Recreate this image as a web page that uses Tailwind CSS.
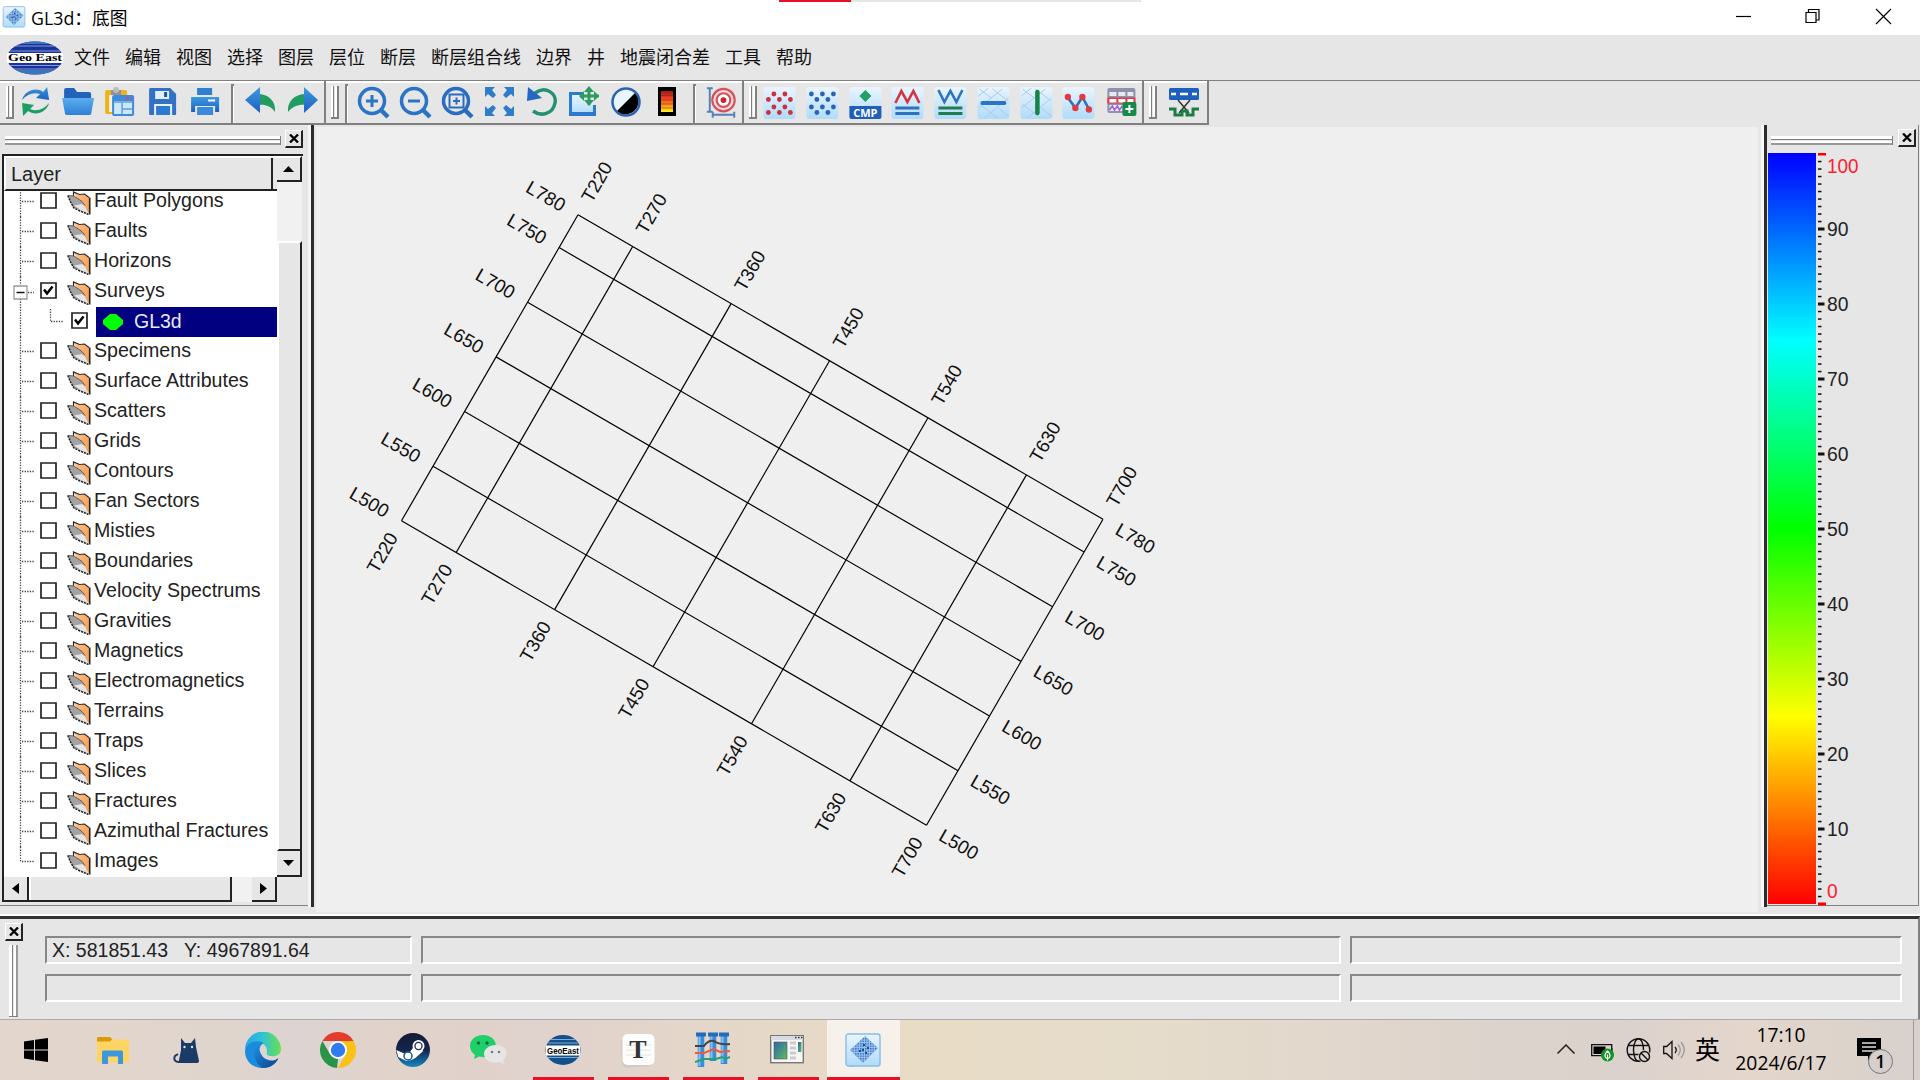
<!DOCTYPE html>
<html lang="zh-CN">
<head>
<meta charset="utf-8">
<title>GL3d：底图</title>
<script src="https://cdn.jsdelivr.net/npm/@tailwindcss/browser@4"></script>
</head>
<body class="w-[1920px] h-[1080px] overflow-hidden flex flex-col bg-[#e6e6e6] text-black font-['Liberation_Sans','Noto_Sans_CJK_SC',sans-serif]">

<!-- shared gradients and symbols -->
<svg class="absolute w-0 h-0" aria-hidden="true">
  <defs>
    <linearGradient id="blue" x1="0" y1="0" x2="0" y2="1"><stop offset="0" stop-color="#3b9bdc"/><stop offset="1" stop-color="#1d5fc4"/></linearGradient>
    <linearGradient id="folderBlue" x1="0" y1="0" x2="0" y2="1"><stop offset="0" stop-color="#5aaef0"/><stop offset="1" stop-color="#2f7fd6"/></linearGradient>
    <linearGradient id="tile" x1="0" y1="0" x2="0" y2="1"><stop offset="0" stop-color="#eaf5fe"/><stop offset="1" stop-color="#b0dbfa"/></linearGradient>
    <linearGradient id="green" x1="0" y1="0" x2="1" y2="1"><stop offset="0" stop-color="#159a6c"/><stop offset="1" stop-color="#158043"/></linearGradient>
    <linearGradient id="heat" x1="0" y1="0" x2="0" y2="1"><stop offset="0" stop-color="#a01818"/><stop offset=".35" stop-color="#f04020"/><stop offset=".65" stop-color="#ff8a20"/><stop offset="1" stop-color="#fff41c"/></linearGradient>
    <linearGradient id="edgeA" x1="0" y1="0" x2="1" y2="0"><stop offset="0" stop-color="#2aa7e8"/><stop offset=".5" stop-color="#31c4d4"/><stop offset="1" stop-color="#6be04a"/></linearGradient>
    <linearGradient id="edgeB" x1="0" y1="0" x2="1" y2="1"><stop offset="0" stop-color="#1d8ddf"/><stop offset="1" stop-color="#0d3f8c"/></linearGradient>
    <linearGradient id="steam" x1="0" y1="0" x2="0" y2="1"><stop offset="0" stop-color="#141a33"/><stop offset=".5" stop-color="#142450"/><stop offset="1" stop-color="#1489c0"/></linearGradient>
    <linearGradient id="screen" x1="0" y1="0" x2="1" y2="1"><stop offset="0" stop-color="#2b66ae"/><stop offset="1" stop-color="#5fbf5a"/></linearGradient>
    <linearGradient id="flap" x1="0" y1="0" x2="1" y2="1"><stop offset="0" stop-color="#ffc38c"/><stop offset="1" stop-color="#f59a4c"/></linearGradient>
    <pattern id="mesh" width="2.500" height="2.500" patternUnits="userSpaceOnUse"><rect width="2.500" height="2.500" fill="#9cc6f0"/><rect width="1.500" height="1.500" fill="#3a72bd"/></pattern>
    <symbol id="appicon" viewBox="0 0 36 36">
      <rect x="1" y="1" width="34" height="32" rx="2.500" fill="url(#tile)" stroke="#87bde6" stroke-width="1.400"/>
      <path d="M20 3L33 15L18 30L5 17Z" fill="url(#mesh)"/>
      <path d="M18 12h2M22 15h2M17 17h2M20 20h2M14 18h2" stroke="#184b94" stroke-width="2"/>
    </symbol>
    <symbol id="folder" viewBox="0 0 24 24">
      <path d="M6.500 1l6 2.500 5-.500 4.500 4v15l-7-6z" fill="url(#flap)"/>
      <path d="M.800 4.500L7 5l8 5.500 3 6 3.500 6.500-8-3.500L6 16z" fill="#a3a3a3"/>
      <path d="M7 14.500l8-1.500 3 2.500 3.500 7-8-3.500z" fill="#e4e4e4"/>
      <path d="M6.500 5V1l6 2.500 5-.500 4.500 3.500" fill="none" stroke="#2a2a2a" stroke-width="1.200"/>
      <path d="M.800 4.500l3 7L7 17l6 3 8.500 3.500" fill="none" stroke="#222" stroke-width="1.500" stroke-dasharray="2.200 .9"/>
      <path d="M.800 4.500L7 5l8 5.500 3 4" fill="none" stroke="#555" stroke-width=".9"/>
      <path d="M22.700 6.500V23.500" stroke="#222" stroke-width="1.600"/>
    </symbol>
  </defs>
</svg>

<!-- title bar -->
<header class="relative h-[35px] shrink-0 bg-white flex items-center">
  <svg class="ml-[2px] mt-[-1px] w-6 h-[23px]"><use href="#appicon"/></svg>
  <h1 class="ml-[5px] text-[17.800px] leading-[24px] font-['Open_Sans','Noto_Sans_CJK_SC',sans-serif] whitespace-nowrap">GL3d：底图</h1>
  <div class="absolute left-[779px] top-0 w-[362px] h-[2px] bg-[#e6e6e6]"><div class="w-[72px] h-full bg-[#e81123]"></div></div>
  <svg class="ml-auto mr-[28px] mt-[-3px] w-[160px] h-[20px]" fill="none" stroke="#000" stroke-width="1.200">
    <path d="M4 10.500h15"/>
    <path d="M74 6.500h10v10H74zM76.500 6.500V3.500h10.500v10.500h-3"/>
    <path d="M144 3l15 15M159 3l-15 15"/>
  </svg>
</header>

<!-- menu bar -->
<nav class="h-[45px] shrink-0 flex items-center text-[18px] leading-[24px] text-[#111] whitespace-nowrap">
  <svg class="ml-[7px] w-[56px] h-[34px]" viewBox="0 0 56 34">
    <clipPath id="oval"><ellipse cx="28" cy="17" rx="28" ry="16.500"/></clipPath>
    <g clip-path="url(#oval)"><path fill="#17339c" d="M0 0h56v34H0z"/><path fill="#3a76c0" d="M0 0h56v3H0zM0 29h56v5H0z"/><path stroke="#8d9ad0" stroke-width="1.200" d="M0 5h56M0 10h56M0 24.500h56M0 28h56"/></g>
    <path fill="#fff" d="M0 12h56v10H0z"/>
    <text x="28" y="20.300" text-anchor="middle" textLength="54" lengthAdjust="spacingAndGlyphs" class="font-['Liberation_Serif',serif] font-bold text-[10px]">Geo East</text>
  </svg>
  <ul class="ml-[11px] flex gap-[15px]">
    <li>文件</li><li>编辑</li><li>视图</li><li>选择</li><li>图层</li><li>层位</li><li>断层</li><li>断层组合线</li><li>边界</li><li>井</li><li>地震闭合差</li><li>工具</li><li>帮助</li>
  </ul>
</nav>

<!-- tool bar -->
<div class="h-[45px] shrink-0 border-t border-[#808080] flex">
  <div class="flex h-full border-b-2 border-[#808080] shadow-[inset_0_2px_0_#fff]">
    <!-- file group -->
    <section class="flex w-[326px] border-r-2 border-[#808080] items-stretch">
      <div class="ml-[6px] mt-[5px] mb-[4px] w-[8px] flex gap-[1px] border-b-2 border-[#808080]"><i class="w-[4px] bg-white border-r border-[#808080]"></i><i class="w-[4px] bg-white border-r-2 border-[#808080]"></i></div>
      <div class="ml-[1px] mt-[2px] flex w-[211px] items-center">
        <svg class="flex-1 h-[34px]" viewBox="0 0 42 34">
          <path d="M7 14C10 4 21 1 28 6l4-5 2 13-13-2 4-4C18 6 12 8 7 14z" fill="url(#blue)"/>
          <path d="M34 17C31 27 20 30 13 25l-5 5-1-13 12 2-4 4C22 26 29 23 34 17z" fill="#1d9e63"/>
        </svg>
        <svg class="flex-1 h-[34px]" viewBox="0 0 42 34">
          <path d="M7 4q0-2 2-2h8l3 4h12q2 0 2 2v8H7z" fill="#2262b8"/><path d="M5 12h32l-3 16q0 1-2 1H10q-2 0-2-1z" fill="url(#folderBlue)"/>
        </svg>
        <svg class="flex-1 h-[34px]" viewBox="0 0 42 34">
          <rect x="6" y="4" width="22" height="24" rx="2" fill="#eeb21b"/><path d="M12 4h10v5H12z" fill="#8d9299"/><circle cx="17" cy="4" r="3" fill="#b9bdc2"/><path d="M10 9h14v17H10z" fill="#f7f0df"/>
          <rect x="13" y="9" width="22" height="21" rx="2" fill="#3d8bdf"/><path d="M15 15h18v13H15z" fill="#cde7fb"/><path d="M15 16h18M23 16v12M23 23h10" stroke="#5a9fe0" stroke-width="1.500"/><path d="M27 12.500h2M31 12.500h2" stroke="#e8434a" stroke-width="2"/>
        </svg>
        <svg class="flex-1 h-[34px]" viewBox="0 0 42 34">
          <path d="M8 2h20l6 6v20q0 1-1 1H8q-1 0-1-1V3z" fill="#3171c6"/><path d="M13 5h14v8H13z" fill="#dff0fd"/><path d="M22 6h3v5h-3z" fill="#22559f"/><path d="M12 18h18v11H12z" fill="#e6f1fb"/><path d="M14 20h14v9H14z" fill="#2d7ad2"/>
        </svg>
        <svg class="flex-1 h-[34px]" viewBox="0 0 42 34">
          <path d="M13 2h15v7H13z" fill="#2f7fd0"/><path d="M7 11h28v15h-4v-6H11v6H7z" fill="url(#blue)"/><path d="M13 21h16v8H13z" fill="#3a8adb"/><path d="M24 14.500h7" stroke="#fff" stroke-width="2"/>
        </svg>
      </div>
      <div class="ml-[5px] mt-[3px] w-[3px] border-l-2 border-t-2 border-[#808080] bg-white"></div>
      <div class="ml-[6px] mt-[2px] flex w-[84px] items-center">
        <svg class="flex-1 h-[34px]" viewBox="0 0 42 34"><path d="M17 8C29 8 36 15 35 26C31 20 25 18 17 19z" fill="#239c64"/><path d="M5 14L20 1v26z" fill="url(#blue)"/></svg>
        <svg class="flex-1 h-[34px]" viewBox="0 0 42 34"><path d="M24 8C12 8 5 16 6 26C11 20 17 18 25 19z" fill="#239c64"/><path d="M36 14L22 1v26z" fill="url(#blue)"/></svg>
      </div>
    </section>
    <!-- view group -->
    <section class="flex w-[418px] border-r-2 border-[#808080] items-stretch">
      <div class="ml-[5px] mt-[5px] mb-[4px] w-[8px] flex gap-[1px] border-b-2 border-[#808080]"><i class="w-[4px] bg-white border-r border-[#808080]"></i><i class="w-[4px] bg-white border-r-2 border-[#808080]"></i></div>
      <div class="ml-[6px] mt-[3px] w-[3px] border-l-2 border-t-2 border-[#808080] bg-white"></div>
      <div class="ml-[5px] mt-[2px] flex w-[336px] items-center">
        <svg class="flex-1 h-[34px]" viewBox="0 0 42 34" fill="none" stroke="#2a74c6"><circle cx="19" cy="15" r="12.500" stroke-width="3.500"/><path d="M28 24l7 7" stroke-width="4.500"/><path d="M19 9v12M13 15h12" stroke-width="3"/></svg>
        <svg class="flex-1 h-[34px]" viewBox="0 0 42 34" fill="none" stroke="#2a74c6"><circle cx="19" cy="15" r="12.500" stroke-width="3.500"/><path d="M28 24l7 7" stroke-width="4.500"/><path d="M13 15h12" stroke-width="3"/></svg>
        <svg class="flex-1 h-[34px]" viewBox="0 0 42 34" fill="none" stroke="#2a6cc0"><circle cx="19" cy="15" r="12.500" stroke-width="3.500"/><path d="M28 24l7 7" stroke-width="4.500"/><path d="M12.500 8.500h14v13h-14z" stroke-width="2"/><path d="M19.500 11.500v7M16 15h7" stroke-width="2"/></svg>
        <svg class="flex-1 h-[34px]" viewBox="0 0 42 34" fill="#2f7cc9"><path d="M6 1h10l-3 3 4 5-3 3-5-4-3 3zM35 1H25l3 3-4 5 3 3 5-4 3 3zM6 30h10l-3-3 4-5-3-3-5 4-3-3zM35 30H25l3-3-4-5 3-3 5 4 3-3z"/></svg>
        <svg class="flex-1 h-[34px]" viewBox="0 0 42 34" fill="none"><path d="M14 7C25-1 36 8 34 17C32 28 20 31 12 25" stroke="#239076" stroke-width="3.500"/><path d="M7 1l14 11L6 15z" fill="#2467c4"/></svg>
        <svg class="flex-1 h-[34px]" viewBox="0 0 42 34"><path d="M7.500 7.500h24v21h-24z" fill="url(#tile)" stroke="#2b7dcc" stroke-width="3"/><path d="M6 26h27v4H6z" fill="#2b78cc"/><path d="M19 1h17v18H22z" fill="#e6e6e6"/><path d="M26 2v17M17 10h19" stroke="#2c9d61" stroke-width="3"/><path d="M26 0l5 6H21zM26 20l5-6H21zM16 10l5-5v10zM36 10l-5-5v10z" fill="#2c9d61"/></svg>
        <svg class="flex-1 h-[34px]" viewBox="0 0 42 34"><circle cx="21" cy="16" r="13.500" fill="#e9f4fe"/><path d="M11.500 25.500L30.500 6.500A13.500 13.500 0 0 1 11.500 25.500z" fill="#000"/><circle cx="21" cy="16" r="13.500" fill="none" stroke="#2a63b0" stroke-width="2.500"/></svg>
        <svg class="flex-1 h-[34px]" viewBox="0 0 42 34"><path d="M11 1h18v29H11z" fill="#000"/><path d="M14 5h12v21H14z" fill="url(#heat)"/><path d="M14 9.500h12M14 14h12M14 18h12M14 22h12" stroke="#7a2010" stroke-width=".5"/></svg>
      </div>
      <div class="ml-[4px] mt-[3px] w-[3px] border-l-2 border-t-2 border-[#808080] bg-white"></div>
      <svg class="ml-[5px] mt-[5px] w-[42px] h-[34px]" viewBox="0 0 42 34" fill="none"><path d="M9 2v24M6 2h6M6 26h6M12 29h22M12 26v6M34 26v6" stroke="#5582b4" stroke-width="2"/><circle cx="23" cy="14" r="11.500" fill="#fbdada" stroke="#d5515c" stroke-width="2.200"/><circle cx="23" cy="14" r="7" fill="#fff" stroke="#d5515c" stroke-width="2.200"/><circle cx="23" cy="14" r="3" fill="#c9242f"/></svg>
    </section>
    <!-- display group -->
    <section class="flex w-[400px] border-r-2 border-[#808080] items-stretch">
      <div class="ml-[5px] mt-[5px] mb-[4px] w-[8px] flex gap-[1px] border-b-2 border-[#808080]"><i class="w-[4px] bg-white border-r border-[#808080]"></i><i class="w-[4px] bg-white border-r-2 border-[#808080]"></i></div>
      <div class="ml-[1px] mt-[5px] flex w-[385px] shrink-0">
        <svg class="flex-1 h-[34px]" viewBox="0 0 42 34"><rect x="5" y="1" width="32" height="32" rx="3" fill="url(#tile)"/><g fill="#cc3038" class="dots"></g></svg>
        <svg class="flex-1 h-[34px]" viewBox="0 0 42 34"><rect x="5" y="1" width="32" height="32" rx="3" fill="url(#tile)"/><g fill="#2a62b4" class="dots"></g></svg>
        <svg class="flex-1 h-[34px]" viewBox="0 0 42 34"><rect x="5" y="1" width="32" height="32" rx="3" fill="url(#tile)"/><path d="M5 20h32v11q0 2-2 2H7q-2 0-2-2z" fill="#1f5fba"/><path d="M21 4l6 6-6 6-6-6z" fill="#24a066"/><text x="21" y="30.500" text-anchor="middle" fill="#fff" class="font-['Open_Sans',sans-serif] font-bold text-[11px]">CMP</text></svg>
        <svg class="flex-1 h-[34px]" viewBox="0 0 42 34"><rect x="5" y="1" width="32" height="32" rx="3" fill="url(#tile)"/><path d="M9 17l6-12 6 11 6-11 6 12" fill="none" stroke="#d5343d" stroke-width="2.600"/><path d="M9 22h24M9 27.500h24" stroke="#2e72bf" stroke-width="2.800"/></svg>
        <svg class="flex-1 h-[34px]" viewBox="0 0 42 34"><rect x="5" y="1" width="32" height="32" rx="3" fill="url(#tile)"/><path d="M9 4l6 12 6-11 6 11 6-12" fill="none" stroke="#2e72bf" stroke-width="2.600"/><path d="M9 22h24M9 27.500h24" stroke="#217d4b" stroke-width="2.800"/></svg>
        <svg class="flex-1 h-[34px]" viewBox="0 0 42 34"><rect x="5" y="1" width="32" height="32" rx="3" fill="url(#tile)"/><path d="M6 10l10-8M6 22L30 3M12 32L36 12M7 3l12 9M20 3l16 12M7 18l18 14M26 22l10 8" stroke="#a9cde8" stroke-width="1"/><path d="M10 17h22" stroke="#2b73c3" stroke-width="4" stroke-linecap="round"/></svg>
        <svg class="flex-1 h-[34px]" viewBox="0 0 42 34"><rect x="5" y="1" width="32" height="32" rx="3" fill="url(#tile)"/><path d="M6 10l10-8M6 22L30 3M12 32L36 12M7 3l12 9M20 3l16 12M7 18l18 14M26 22l10 8" stroke="#a9cde8" stroke-width="1"/><path d="M22 6v21" stroke="#158546" stroke-width="4.500" stroke-linecap="round"/></svg>
        <svg class="flex-1 h-[34px]" viewBox="0 0 42 34"><rect x="5" y="1" width="32" height="32" rx="3" fill="url(#tile)"/><path d="M10 11l8 11 7-11 7 13" fill="none" stroke="#2e6db9" stroke-width="2.600"/><g fill="#e13a41"><circle cx="10.500" cy="11" r="3.200"/><circle cx="18" cy="22" r="3.200"/><circle cx="25" cy="11" r="3.200"/><circle cx="31.500" cy="23.500" r="3.200"/></g></svg>
        <svg class="flex-1 h-[34px]" viewBox="0 0 42 34"><rect x="7" y="2" width="28" height="25" rx="2" fill="#8d93aa"/><path d="M9 6h7v4H9zM18 6h7v4h-7zM27 6h6v4h-6zM9 19h24v6H9z" fill="#e8e9f2"/><path d="M7 11.500h28v6H7z" fill="#e23a48"/><path d="M9 13h7v3.500H9zM18 13h7v3.500h-7zM27 13h6v3.500h-6z" fill="#fff"/><path d="M9 24l3-4 2 4 3-4 2 4 3-4" fill="none" stroke="#a35bd6" stroke-width="1.500"/><rect x="22" y="16" width="14" height="14" rx="2" fill="#178a49"/><path d="M29 19v8M25 23h8" stroke="#fff" stroke-width="2"/></svg>
      </div>
    </section>
    <section class="flex w-[65px] border-r-2 border-[#808080] items-stretch">
      <div class="ml-[5px] mt-[5px] mb-[4px] w-[8px] flex gap-[1px] border-b-2 border-[#808080]"><i class="w-[4px] bg-white border-r border-[#808080]"></i><i class="w-[4px] bg-white border-r-2 border-[#808080]"></i></div>
      <svg class="ml-[6px] mt-[5px] w-[42px] h-[34px]" viewBox="0 0 42 34" fill="none"><rect x="6" y="2" width="30" height="12" rx="1.500" fill="#1e60bd"/><path d="M8 8h5M17 8h8M29 8h5" stroke="#fff" stroke-width="2.500"/><path d="M15 14l11 13M27 14L16 27" stroke="#333" stroke-width="1.500"/><path d="M6 23h6v6h7v-4h5v4h6v-6h6" stroke="#1d7c46" stroke-width="3"/></svg>
    </section>
  </div>
</div>

<!-- work area -->
<main class="h-[789px] shrink-0 flex">
  <!-- layer dock -->
  <aside class="w-[308px] h-[781px] shrink-0 border-b border-[#808080] pl-[2px]">
    <div class="h-[29px] flex items-start">
      <div class="ml-[3px] mt-[11px] w-[276px] h-[9px] border-r border-[#808080] flex flex-col gap-[1px]"><i class="h-[4px] bg-white border-b border-[#808080]"></i><i class="h-[4px] bg-white border-b-2 border-[#999]"></i></div>
      <button class="ml-[4px] mt-[5px] w-[18px] h-[18px] bg-[#e6e6e6] border-l border-t border-l-white border-t-white border-r-2 border-b-2 border-r-[#222] border-b-[#222] flex items-center justify-center"><svg class="w-[10px] h-[9px]" viewBox="0 0 10 9"><path d="M1 .500l8 8M9 .500l-8 8" stroke="#000" stroke-width="2.300"/></svg></button>
    </div>
    <div class="w-[301px] h-[748px] border-l-2 border-t-2 border-[#222] flex">
      <div class="w-[273px] flex flex-col bg-white">
        <div class="h-[35px] shrink-0 bg-[#e6e6e6] border-l-2 border-t-2 border-white border-b-2 border-b-[#222] pl-[5px] pr-[4px] flex items-center justify-between text-[20px] text-[#222]"><span class="pt-[1px]">Layer</span><i class="h-full border-r-2 border-[#222]"></i></div>
        <div id="tree" class="h-[687px] overflow-hidden bg-white"></div>
        <div class="h-[25px] shrink-0 flex">
          <div class="w-[25px] bg-[#e6e6e6] border-r-2 border-b-2 border-[#222] flex items-center justify-center"><svg class="w-[7px] h-[11px]"><path d="M7 0v11L0 5.500z"/></svg></div>
          <div class="w-[203px] bg-[#e6e6e6] border-r-2 border-b-2 border-[#222] shadow-[inset_2px_0_0_#fff]"></div>
          <div class="w-[20px] bg-[#f1f1f1]"></div>
          <div class="w-[25px] bg-[#e6e6e6] border-r-2 border-b-2 border-[#222] flex items-center justify-center"><svg class="w-[7px] h-[11px]"><path d="M0 0v11l7-5.500z"/></svg></div>
        </div>
      </div>
      <div class="w-[26px] pr-[1px] flex flex-col">
        <div class="h-[26px] bg-[#e6e6e6] border-t-2 border-t-white border-r-2 border-b-2 border-r-[#222] border-b-[#222] flex items-center justify-center"><svg class="w-[11px] h-[6px]"><path d="M0 6h11L5.500 0z"/></svg></div>
        <div class="h-[59px] bg-[#f1f1f1]"></div>
        <div class="h-[610px] bg-[#e6e6e6] border-t-2 border-l-2 border-l-white border-t-white border-r-2 border-b-2 border-r-[#222] border-b-[#222]"></div>
        <div class="h-[26px] bg-[#e6e6e6] border-r-2 border-b-2 border-[#222] flex items-center justify-center"><svg class="w-[11px] h-[6px]"><path d="M0 0h11L5.500 6z"/></svg></div>
      </div>
    </div>
  </aside>
  <div class="w-[8px] h-[782px] shrink-0 flex"><i class="w-[3px] bg-[#f4f4f4]"></i><i class="w-[3px] bg-[#2c2c2c]"></i></div>

  <!-- base map -->
  <section class="w-[1442px] h-[785px] shrink-0 mt-[2px] -mb-[2px] bg-[#efefef]">
    <svg id="map" class="w-[1442px] h-[785px] font-['Liberation_Sans',sans-serif] text-[18.800px]" viewBox="316 126.500 1442 785"></svg>
  </section>
  <div class="w-[9px] h-[782px] shrink-0 flex"><i class="w-[3px]"></i><i class="w-[3px] bg-[#f8f8f8]"></i><i class="w-[3px] bg-[#2c2c2c]"></i></div>

  <!-- colour scale dock -->
  <aside class="w-[152px] h-[781px] shrink-0 border-b border-r border-[#808080]">
    <div class="h-[28px] flex items-start">
      <div class="ml-[4px] mt-[11px] w-[122px] h-[9px] border-r border-[#808080] flex flex-col gap-[1px]"><i class="h-[4px] bg-white border-b border-[#808080]"></i><i class="h-[4px] bg-white border-b-2 border-[#999]"></i></div>
      <button class="ml-[5px] mt-[4px] w-[18px] h-[18px] bg-[#e6e6e6] border-l border-t border-l-white border-t-white border-r-2 border-b-2 border-r-[#222] border-b-[#222] flex items-center justify-center"><svg class="w-[10px] h-[9px]" viewBox="0 0 10 9"><path d="M1 .500l8 8M9 .500l-8 8" stroke="#000" stroke-width="2.300"/></svg></button>
    </div>
    <div class="flex pl-[1px]">
      <div class="w-[48px] mr-px h-[751px] bg-[linear-gradient(to_bottom,#00f_0%,#0ff_25%,#0f0_50%,#ff0_75%,#f00_100%)]"></div>
      <svg id="scale" class="w-[100px] h-[753px] text-[19.500px]" viewBox="1817 153 100 753"></svg>
    </div>
  </aside>
</main>

<!-- status dock -->
<footer class="h-[106px] shrink-0 border-t-2 border-white border-b border-b-[#aaa]">
  <div class="h-[103px] border-t-[3px] border-[#333] border-r-2 border-r-[#808080] flex">
    <div class="w-[45px] pl-[5px] pt-[4px]">
      <button class="w-[18px] h-[18px] bg-[#e6e6e6] border-l border-t border-l-white border-t-white border-r-2 border-b-2 border-r-[#222] border-b-[#222] flex items-center justify-center"><svg class="w-[10px] h-[9px]" viewBox="0 0 10 9"><path d="M1 .500l8 8M9 .500l-8 8" stroke="#000" stroke-width="2.300"/></svg></button>
      <div class="ml-[4px] mt-[4px] w-[9px] h-[72px] flex gap-[1px] border-b border-[#808080]"><i class="w-[4px] bg-white border-r border-[#808080]"></i><i class="w-[4px] bg-white border-r-2 border-[#999]"></i></div>
    </div>
    <div class="mt-[17px] grid grid-cols-[367px_920px_552px] grid-rows-[28px_28px] gap-x-[9px] gap-y-[10px] text-[19.500px] text-[#222] [&>div]:border-l-2 [&>div]:border-t-2 [&>div]:border-l-[#888] [&>div]:border-t-[#888] [&>div]:border-r-2 [&>div]:border-b-2 [&>div]:border-r-white [&>div]:border-b-white">
      <div class="pl-[5px] leading-[24px] whitespace-pre">X: 581851.43   Y: 4967891.64</div><div></div><div></div>
      <div></div><div></div><div></div>
    </div>
  </div>
</footer>

<!-- task bar -->
<div class="h-[60px] shrink-0 flex bg-[linear-gradient(to_right,#e3d6cc_0%,#e0d5cd_12%,#dcd3d2_15.500%,#e1d3ca_20%,#e0d2cc_28%,#e4d6c9_36%,#e8dcc6_48%,#e6dccb_60%,#e0d6cc_72%,#dcd3cc_78%,#dcd2cd_85%,#e4d6cb_91%,#dcd3cb_96%,#d8d0cc_100%)]">
  <div class="flex pl-[1px]">
    <div class="w-[75px] pl-[23px] pt-[18px]"><svg class="w-6 h-6"><path d="M0 3.400L10 2v9.500H0zM11 1.800L24 0v11.500H11zM0 12.500h10V22L0 20.600zM11 12.500h13V24l-13-1.800z"/></svg></div>
    <div class="w-[75px] pl-[21px] pt-[17px]"><svg class="w-8 h-7"><path d="M0 1q0-1 1-1h12l2 2v4H0z" fill="#dc9a05"/><path d="M0 4.500h13l2-2h15q2 0 2 2V24q0 1.500-2 1.500H0z" fill="#fed462"/><path d="M5 27V15q0-1.500 1.500-1.500h18Q26 13.500 26 15v12h-5v-7.500H11V27z" fill="#3d97dc"/></svg></div>
    <div class="w-[75px] pl-[22px] pt-[17px]"><svg class="w-[27px] h-[27px]"><path d="M8 1l4 5h6l4-5 1 9 3 14q0 2-2 2H6q0 0 0-3l2-10z" fill="#1c3a66"/><path d="M8 24.500C3 26 0 23 2 19l3-2" fill="none" stroke="#1c3a66" stroke-width="2"/><circle cx="11.500" cy="10" r="1.200" fill="#dfe8f5"/><circle cx="19" cy="10" r="1.200" fill="#dfe8f5"/></svg></div>
    <div class="w-[75px] pl-[19px] pt-[12px]"><svg class="w-9 h-9" viewBox="0 0 36 36"><path d="M0 18A18 18 0 0 1 36 17C36 23 30 25 26 24C20 24 22 20 22 18C21 12 15 9 10 10C5 11 1 14 0 18z" fill="url(#edgeA)"/><path d="M0 19C1 10 12 7 19 11C14 13 12 21 18 27C22 31 30 30 33 26C31 33 23 37 16 36C6 35 0 28 0 19z" fill="#1b8bdc"/><path d="M14 14C7 18 8 29 17 36C25 36 31 32 33.500 26C29 30 22 29 18 25C15 21 14 18 14 14z" fill="url(#edgeB)"/></svg></div>
    <div class="w-[75px] pl-[19px] pt-[12px]"><svg class="w-9 h-9" viewBox="0 0 36 36"><path d="M2.400 9A18 18 0 0 1 33.600 9H18z" fill="#e33b2e"/><path d="M2.400 9L10.200 22.500L18 27l-1 9A18 18 0 0 1 2.400 9z" fill="#299447"/><path d="M33.600 9A18 18 0 0 1 18 36L25.800 22.500L18 9z" fill="#fcc117"/><circle cx="18" cy="18" r="9" fill="#fff"/><circle cx="18" cy="18" r="7.200" fill="#2f7cf0"/></svg></div>
    <div class="w-[75px] pl-[20px] pt-[13px]"><svg class="w-[34px] h-[34px]" viewBox="0 0 34 34"><circle cx="17" cy="17" r="17" fill="url(#steam)"/><path d="M.300 17l9 4 4-1 5-7 9 5-8 7-4 2-5 1-8-4z" fill="#fff"/><circle cx="22.500" cy="13" r="6" fill="#fff"/><circle cx="22.500" cy="13" r="4.200" fill="#1b2c57"/><circle cx="22.500" cy="13" r="2.900" fill="#fff"/><circle cx="12" cy="23" r="4" fill="#fff" stroke="#19578c" stroke-width="1.500"/></svg></div>
    <div class="w-[75px] pl-[19px] pt-[15px]"><svg class="w-[38px] h-[30px]" viewBox="0 0 38 30"><path d="M13 0C5 0 0 5 0 11c0 4 2 7 5 9l-1 4 5-2.500c12 3 17-3 17-10C26 5 21 0 13 0z" fill="#1fd06a"/><circle cx="8.500" cy="8" r="1.700" fill="#17663b"/><circle cx="17" cy="8" r="1.700" fill="#17663b"/><path d="M26 10c-7 0-12 4-12 9s6 11 16 8l4 2-1-4c7-6 3-15-7-15z" fill="#e6e6e6"/><circle cx="22" cy="17" r="1.300" fill="#777"/><circle cx="29" cy="17" r="1.300" fill="#777"/></svg></div>
  </div>
  <div class="flex ml-[7px] gap-[14px]">
    <div class="w-[61px] h-full border-b-[3px] border-[#e81123] flex justify-center pt-[15px] pr-[2px]"><svg class="w-9 h-[30px]" viewBox="0 0 36 30"><clipPath id="ov2"><ellipse cx="18" cy="15" rx="17.500" ry="15"/></clipPath><g clip-path="url(#ov2)"><path d="M0 0h36v30H0z" fill="#145089"/><path d="M0 4.500h36M0 8h36M0 22.500h36" stroke="#7fa9cf" stroke-width="1.200"/></g><path d="M1 10.500h34v10H1z" fill="#fff"/><text x="18" y="18.600" text-anchor="middle" textLength="32" lengthAdjust="spacingAndGlyphs" class="font-bold text-[8.500px]">GeoEast</text></svg></div>
    <div class="w-[61px] h-full border-b-[3px] border-[#e81123] flex justify-center pt-[14px] pr-[2px]"><svg class="w-[35px] h-[34px]" viewBox="0 0 35 34"><rect x="1" y="4" width="31" height="29" rx="5" fill="#d2cbc5" transform="rotate(-4 16 17)"/><rect x="2.500" y="0" width="32" height="31" rx="5" fill="#fdfdfd"/><path d="M6 11h25M6 16h25M6 21h25" stroke="#e4e4e4"/><text x="18" y="24" text-anchor="middle" fill="#333" class="font-['Liberation_Serif',serif] font-bold text-[26px]">T</text></svg></div>
    <div class="w-[61px] h-full border-b-[3px] border-[#e81123] flex justify-center pt-[12px] pr-[2px]"><svg class="w-9 h-9" viewBox="0 0 36 36" fill="none"><path d="M6 2v33M18 2v27M29 2v30" stroke="#398cdc" stroke-width="6.500"/><path d="M4.500 4v30M16.500 4v24M27.500 4v27" stroke="#83c1f5" stroke-width="2"/><path d="M1 2.500h10M13 2.500h10M24 2.500h10" stroke="#256abc" stroke-width="4"/><path d="M0 14h9q4-6 10-5 5 4 16 3" stroke="#444" stroke-width="2"/><path d="M0 21h9l10-4 6 3 10-1" stroke="#ef5a38" stroke-width="2"/><path d="M0 30l9-3 12 0 6-2 3 2 5-2" stroke="#22a078" stroke-width="2"/></svg></div>
    <div class="w-[61px] h-full border-b-[3px] border-[#e81123] flex justify-center pt-[15px] pr-[3px]"><svg class="w-[34px] h-[29px]" viewBox="0 0 34 29"><rect x=".7" y=".7" width="32.600" height="27" fill="#f6f6f6" stroke="#777" stroke-width="1.400"/><path d="M1 1h32v4H1z" fill="#d8dbe2"/><path d="M25 2.500h1.500M28 2.500h1.500M31 2.500h1.500" stroke="#333" stroke-width="1.500"/><rect x="4" y="7" width="13" height="17" fill="url(#screen)" stroke="#555" stroke-width=".6"/><path d="M20 8h6M20 13h6M20 18h6M20 23h6" stroke="#ccc" stroke-width="3"/><path d="M28 7h3.500v10H28z" fill="url(#screen)"/></svg></div>
  </div>
  <div class="ml-[8px] w-[73px] h-full bg-[#f6f1eb] border-b-[3px] border-[#e81123] flex justify-center pt-[13px] pr-[1px]"><svg class="w-9 h-9"><path d="M3 29l2 5 28-4z" fill="#b5b1aa"/><use href="#appicon" width="36" height="36"/></svg></div>

  <!-- tray -->
  <div class="ml-auto flex items-center h-full">
    <svg class="w-[18px] h-[10px] mt-[-2px]" fill="none" stroke="#222" stroke-width="1.500"><path d="M.500 9.500L9 1l8.500 8.500"/></svg>
    <svg class="ml-[16px] mt-[4px] w-[24px] h-[20px]" fill="none"><path d="M.700 2.700h20v11H.700zM21 6v4" stroke="#111" stroke-width="1.300"/><path d="M2.500 4.500h12v7.500h-12z" fill="#000"/><circle cx="16.500" cy="13" r="6.500" fill="#109425"/><path d="M16.500 9q-3 3-2.500 5.500q1 2 2.500 2t2.500-2Q19.500 12 16.500 9zM16.500 12.500v6" stroke="#fff" stroke-width="1.100"/></svg>
    <svg class="ml-[11px] w-[25px] h-[25px]" fill="none" stroke="#111" stroke-width="1.400"><circle cx="12.500" cy="12" r="11.300"/><ellipse cx="12.500" cy="12" rx="5" ry="11.300"/><path d="M2.500 7.500h20M2.500 16.500h20"/><circle cx="18.500" cy="18.500" r="6.500" fill="#ddd3cc" stroke="none"/><circle cx="18.500" cy="18.500" r="5"/><path d="M15 15l7 7"/></svg>
    <svg class="ml-[12px] w-[24px] h-[20px]" fill="none" stroke="#111" stroke-width="1.300"><path d="M.700 6.500h3L9 1.500v17l-5.500-5h-2.800z"/><path d="M12 7q2.500 3 0 6"/><path d="M15 4.500q4.500 5.500 0 11M18 2q6.500 8 0 16" stroke="#999"/></svg>
    <span class="ml-[8px] mt-[-4px] text-[25px] leading-[30px] font-['Noto_Sans_CJK_SC',sans-serif]">英</span>
    <div class="ml-[14px] w-[94px] text-center text-[19.300px] leading-[28px] font-['Open_Sans',sans-serif] whitespace-nowrap"><p class="mt-[-2px]">17:10</p><p>2024/6/17</p></div>
    <svg class="ml-[29px] mt-[11px] w-[37px] h-[38px]"><path d="M0 1h24v18H15l-4 5v-5H0z"/><path d="M5 6h14M5 10h14M5 14h14" stroke="#ddd" stroke-width="1.300"/><circle cx="23.500" cy="24.500" r="12" fill="#d4cecc" stroke="#777"/><text x="23.500" y="31" text-anchor="middle" class="font-['Open_Sans',sans-serif] font-semibold text-[18px]">1</text></svg>
    <i class="ml-[19px] w-[7px] h-full border-l border-[#999]"></i>
  </div>
</div>

<script>
// dot pattern used by the two point display buttons
document.querySelectorAll('.dots').forEach(g => {
  let s = '';
  [[8, 0], [13.500, 1], [21, 0], [26.500, 1]].forEach(([y, odd]) => {
    const first = g.getAttribute('fill') === '#cc3038';
    const wide = [10, 21, 32], narrow = [15.500, 26.500];
    ((odd === 1) === first ? wide : narrow).forEach(x => s += `<circle cx="${x}" cy="${y}" r="2.400"/>`);
  });
  g.innerHTML = s;
});

// layer tree
const layers = ['Fault Polygons', 'Faults', 'Horizons', 'Surveys', 'GL3d', 'Specimens', 'Surface Attributes', 'Scatters', 'Grids', 'Contours', 'Fan Sectors', 'Misties', 'Boundaries', 'Velocity Spectrums', 'Gravities', 'Magnetics', 'Electromagnetics', 'Terrains', 'Traps', 'Slices', 'Fractures', 'Azimuthal Fractures', 'Images'];
const tick = '<path d="M4 7.500l3 4 5.500-7" fill="none" stroke="#000" stroke-width="2.500"/>';
const box = on => `<svg class="w-[17px] h-[17px] shrink-0 mt-[-3px]"><path d="M1 1h15v15H1z" fill="#fff" stroke="#222" stroke-width="1.700"/>${on ? tick : ''}</svg>`;
document.getElementById('tree').innerHTML = layers.map((n, i) => {
  const first = i === 0 ? 'mt-[-4px] ' : '';
  const last = i === layers.length - 1;
  if (n === 'GL3d') return `<div class="h-[30px] flex items-center"><svg class="w-[67px] h-[30px] shrink-0" fill="none" stroke="#444" stroke-width="1.300" stroke-dasharray="1.300 1.300"><path d="M16.500 0v30M46.500 2v12.500H59"/></svg>${box(true)}<div class="ml-[8px] w-[181px] h-[30px] bg-[#000080] flex items-center text-[#e8e8f4] text-[19.500px]"><svg class="ml-[7px] w-[20px] h-[18px]"><path d="M7 1h6l7 6v4l-7 6H7L0 11V7z" fill="#0f0"/></svg><span class="ml-[11px] mt-[-1px]">${n}</span></div></div>`;
  const node = n === 'Surveys'
    ? '<path d="M16.500 0v8M16.500 22v8M24 15.500h6"/><g stroke-dasharray="none"><path d="M10 9h13v13H10z" fill="#fff" stroke="#999"/><path d="M12.500 15.500h8" stroke="#111" stroke-width="1.500"/></g>'
    : `<path d="M16.500 0v${last ? 15 : 30}M18 14.500h12"/>`;
  return `<div class="${first}h-[30px] flex items-center whitespace-nowrap text-[19.600px] text-[#222]"><svg class="w-[36px] h-[30px] shrink-0" stroke="#444" stroke-width="1.300" stroke-dasharray="1.300 1.300" fill="none">${node}</svg>${box(n === 'Surveys')}<svg class="ml-[10px] mt-[1px] w-6 h-6 shrink-0"><use href="#folder"/></svg><span class="ml-[3px] mt-[-2px]">${n}</span></div>`;
}).join('');

// survey grid: inlines (L) and crosslines (T)
const T = [220, 270, 360, 450, 540, 630, 700], L = [780, 750, 700, 650, 600, 550, 500];
const pt = (l, t) => { const a = (t - 220) / 480, b = (780 - l) / 280; return [578 + 525 * a - 176.500 * b, 214.300 + 304.500 * a + 306 * b]; };
const label = (p, dx, dy, r, s) => `<text transform="translate(${p[0] + dx} ${p[1] + dy}) rotate(${r})" text-anchor="middle" dy=".36em">${s}</text>`;
let m = '<g stroke="#000" stroke-width="1.200">';
L.forEach(l => { const a = pt(l, 220), b = pt(l, 700); m += `<path d="M${a}L${b}"/>`; });
T.forEach(t => { const a = pt(780, t), b = pt(500, t); m += `<path d="M${a}L${b}"/>`; });
m += '</g><g fill="#111">';
L.forEach(l => { m += label(pt(l, 220), -32, -19, 30, 'L' + l) + label(pt(l, 700), 32.500, 18.800, 30, 'L' + l); });
T.forEach(t => { m += label(pt(780, t), 18.500, -33, -60, 'T' + t) + label(pt(500, t), -19.500, 31.700, -60, 'T' + t); });
document.getElementById('map').innerHTML = m + '</g>';

// colour scale ticks
let c = '';
for (let v = 0; v <= 100; v++) {
  const y = 904 - 7.500 * v, end = v % 100 === 0, major = v % 10 === 0;
  c += `<rect x="1818" y="${y - (major ? 1.500 : .7)}" width="${end ? 8 : major ? 6.500 : 3.500}" height="${major ? 3 : 1.500}" fill="${end ? '#f00' : '#111'}"/>`;
  if (major) c += `<text x="1827" y="${(v === 100 ? 166 : v === 0 ? 890.500 : y) + 7}" textLength="${v === 100 ? 31.500 : v ? 21.500 : 10.700}" lengthAdjust="spacingAndGlyphs" fill="${end ? '#ff2030' : '#222'}">${v}</text>`;
}
document.getElementById('scale').innerHTML = c;
</script>
</body>
</html>
